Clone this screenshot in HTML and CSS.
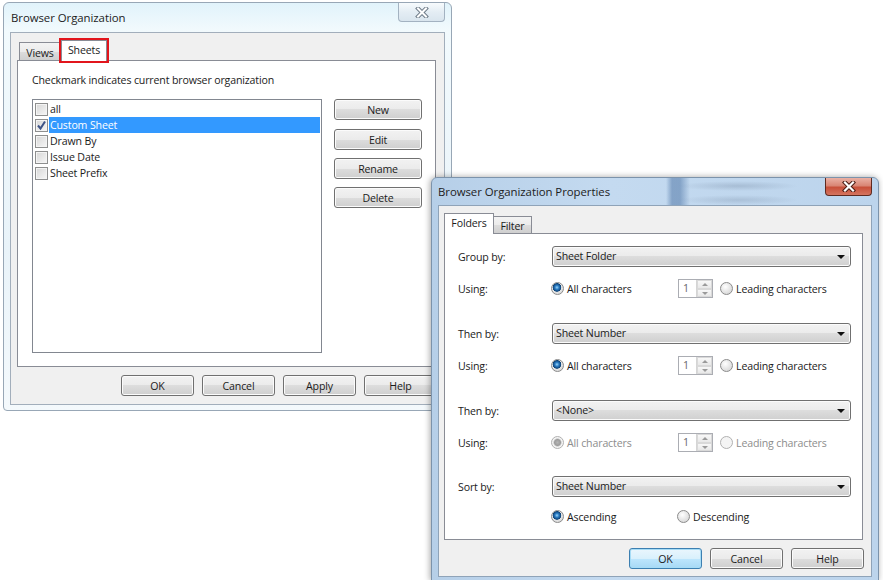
FILE: index.html
```html
<!DOCTYPE html>
<html lang="en">

<head>
    <meta charset="UTF-8">
    <title>Browser Organization</title>
    <link rel="stylesheet" href="styles.css">
</head>

<body>
    <!-- first window: Browser Organization (inactive) -->
    <div class="win dlg1">
        <div class="titlebar">
            <span class="title">Browser Organization</span>
            <span class="close">
                <svg width="14" height="11" viewBox="0 0 14 11">
                    <path d="M3 1.5L11 9.5M11 1.5L3 9.5" stroke="#6f7c89" stroke-width="4" stroke-linecap="square" />
                    <path d="M3 1.5L11 9.5M11 1.5L3 9.5" stroke="#fff" stroke-width="2" stroke-linecap="square" />
                </svg>
            </span>
        </div>
        <div class="client">
            <div class="tabs">
                <div class="tab views">Views</div>
                <div class="tab sheets active marked">Sheets</div>
            </div>
            <div class="pane">
                <p class="hint">Checkmark indicates current browser organization</p>
                <div class="pane-body">
                    <ul class="list">
                        <li><span class="cb"></span><span class="item">all</span></li>
                        <li class="selected"><span class="cb">
                                <svg width="11" height="11" viewBox="0 0 11 11">
                                    <path d="M2 5.5L4.5 8.5L9 1.5" fill="none" stroke="#3e5386" stroke-width="2" />
                                </svg>
                            </span><span class="item">Custom Sheet</span></li>
                        <li><span class="cb"></span><span class="item">Drawn By</span></li>
                        <li><span class="cb"></span><span class="item">Issue Date</span></li>
                        <li><span class="cb"></span><span class="item">Sheet Prefix</span></li>
                    </ul>
                    <div class="side-btns">
                        <button class="btn">New</button>
                        <button class="btn">Edit</button>
                        <button class="btn">Rename</button>
                        <button class="btn">Delete</button>
                    </div>
                </div>
            </div>
            <div class="footer">
                <button class="btn">OK</button>
                <button class="btn">Cancel</button>
                <button class="btn">Apply</button>
                <button class="btn">Help</button>
            </div>
        </div>
    </div>

    <!-- second window: Browser Organization Properties (active) -->
    <div class="win dlg2">
        <div class="titlebar">
            <span class="title">Browser Organization Properties</span>
            <span class="close red">
                <svg width="14" height="11" viewBox="0 0 14 11">
                    <path d="M3 1.5L11 9.5M11 1.5L3 9.5" stroke="#4a1c14" stroke-width="4.2" stroke-linecap="square" />
                    <path d="M3 1.5L11 9.5M11 1.5L3 9.5" stroke="#fff" stroke-width="2.2" stroke-linecap="square" />
                </svg>
            </span>
        </div>
        <div class="client">
            <div class="tabs">
                <div class="tab folders active">Folders</div>
                <div class="tab filter">Filter</div>
            </div>
            <div class="pane pane2">
                <div class="field">
                    <span class="lbl">Group by:</span>
                    <div class="select">Sheet Folder</div>
                </div>
                <div class="using">
                    <span class="lbl">Using:</span>
                    <span class="opt"><span class="rb on"></span>All characters</span>
                    <span class="spin"><span class="spin-val">1</span><span class="spin-btns"><i class="up"></i><i class="down"></i></span></span>
                    <span class="opt opt2"><span class="rb"></span>Leading characters</span>
                </div>

                <div class="field">
                    <span class="lbl">Then by:</span>
                    <div class="select">Sheet Number</div>
                </div>
                <div class="using">
                    <span class="lbl">Using:</span>
                    <span class="opt"><span class="rb on"></span>All characters</span>
                    <span class="spin"><span class="spin-val">1</span><span class="spin-btns"><i class="up"></i><i class="down"></i></span></span>
                    <span class="opt opt2"><span class="rb"></span>Leading characters</span>
                </div>

                <div class="field">
                    <span class="lbl">Then by:</span>
                    <div class="select">&lt;None&gt;</div>
                </div>
                <div class="using disabled last">
                    <span class="lbl">Using:</span>
                    <span class="opt"><span class="rb on"></span>All characters</span>
                    <span class="spin"><span class="spin-val">1</span><span class="spin-btns"><i class="up"></i><i class="down"></i></span></span>
                    <span class="opt opt2"><span class="rb"></span>Leading characters</span>
                </div>

                <div class="field">
                    <span class="lbl">Sort by:</span>
                    <div class="select">Sheet Number</div>
                </div>
                <div class="sort">
                    <span class="opt"><span class="rb on"></span>Ascending</span>
                    <span class="opt"><span class="rb"></span>Descending</span>
                </div>
            </div>
            <div class="footer">
                <button class="btn default">OK</button>
                <button class="btn">Cancel</button>
                <button class="btn">Help</button>
            </div>
        </div>
    </div>
</body>

</html>
```

FILE: styles.css
```css
* {
    box-sizing: border-box;
    margin: 0;
    padding: 0;
}

body {
    width: 883px;
    height: 580px;
    overflow: hidden;
    position: relative;
    background-color: #fff;
    font-family: 'Open Sans', 'Noto Sans', sans-serif;
    font-size: 10.6px;
    letter-spacing: -0.15px;
    color: #1b1b1b;
}

/* windows sit on the desktop */
.win {
    position: absolute;
    display: flex;
    flex-direction: column;
    border: 1px solid #98a7b6;
}

.dlg1 {
    left: 3px;
    top: 2px;
    width: 449px;
    height: 409px;
    padding: 0 6px 5px 6px;
    border-radius: 6px 6px 4px 4px;
    background: linear-gradient(#e1f3fb, #f2fafd 28px, #e9f3f9 60%, #f4f9fc);
}

.dlg2 {
    left: 431px;
    top: 177px;
    width: 448px;
    height: 404px;
    padding: 0 6px 3px 6px;
    border-color: #7c93ab;
    border-radius: 6px 6px 0 0;
    background: linear-gradient(to right, #b6cfe8, #c4daf0 40%, #bcd4ec);
    box-shadow: -1px 0 6px rgba(0, 0, 0, .35);
}

.titlebar {
    height: 29px;
    flex-shrink: 0;
    display: flex;
    align-items: center;
    justify-content: space-between;
    position: relative;
}

.dlg2 .titlebar {
    height: 27px;
    background:
        linear-gradient(to right, transparent 228px, rgba(70, 110, 160, .5) 234px, rgba(70, 110, 160, .5) 242px, transparent 252px),
        radial-gradient(ellipse 60px 5px at 300px 8px, rgba(120, 140, 165, .35), transparent),
        radial-gradient(ellipse 60px 5px at 300px 22px, rgba(120, 140, 165, .3), transparent);
}

.title {
    font-size: 11.4px;
    letter-spacing: -0.05px;
    margin-left: 1px;
    color: #1c1c1c;
}

.dlg2 .title {
    margin-left: 0;
}

.close {
    align-self: flex-start;
    width: 47px;
    height: 19px;
    display: flex;
    align-items: center;
    justify-content: center;
    border: 1px solid #a3b2c1;
    border-top: none;
    border-radius: 0 0 4px 4px;
    background: linear-gradient(#f7fbfd, #e4edf4 50%, #d9e5ee);
}

.close.red {
    height: 18px;
    border-color: #5e2a20;
    background: linear-gradient(#eab0a4, #d98675 45%, #c8503a 55%, #d4745f);
}

.client {
    flex: 1;
    display: flex;
    flex-direction: column;
    border: 1px solid #a2aebb;
    background-color: #f0f0f0;
    padding: 6px 8px 8px 6px;
}

.dlg2 .client {
    padding: 7px 8px 7px 5px;
    border-color: #8fa3b8;
}

/* tabs */
.tabs {
    display: flex;
    align-items: flex-end;
    height: 21px;
}

.dlg2 .tabs {
    height: 20px;
}

.tab {
    height: 18px;
    border: 1px solid #898c95;
    border-bottom: none;
    display: flex;
    align-items: center;
    justify-content: center;
    background: linear-gradient(#f3f3f3, #ebebeb 50%, #dddddd 50%, #cfcfcf);
}

.tab.active {
    height: 21px;
    margin-bottom: -1px;
    position: relative;
    z-index: 1;
    background: #fff;
    padding-bottom: 2px;
}

.views {
    width: 42px;
    margin-left: 2px;
    padding-top: 2px;
}

.sheets {
    width: 46px;
    height: 21px;
}

.marked {
    outline: 2px solid #e2151c;
}

.folders {
    width: 50px;
    height: 21px;
}

.filter {
    width: 38px;
    height: 17px;
    border-left: none;
    padding-top: 2px;
}

.pane {
    flex: 1;
    border: 1px solid #898c95;
    background-color: #fff;
    padding: 11px 13px 13px 14px;
    display: flex;
    flex-direction: column;
}

.hint {
    line-height: 16px;
    margin-bottom: 11px;
}

.pane-body {
    display: flex;
    gap: 12px;
}

.list {
    list-style: none;
    width: 290px;
    height: 254px;
    border: 1px solid #828790;
    padding: 1px 1px 1px 2px;
    background-color: #fff;
}

.list li {
    height: 16px;
    display: flex;
    align-items: center;
}

.item {
    flex: 1;
    height: 16px;
    line-height: 16px;
    padding-left: 1px;
    margin-left: 1px;
}

.selected .item {
    background-color: #3399ff;
    color: #fff;
}

.cb {
    width: 13px;
    height: 13px;
    border: 1px solid #8e8f8f;
    background: linear-gradient(135deg, #d6d6d6, #f7f7f7);
    box-shadow: inset 0 0 0 1px #f4f4f4;
    display: flex;
    align-items: center;
    justify-content: center;
}

.side-btns {
    display: flex;
    flex-direction: column;
    gap: 8px;
    width: 88px;
}

.side-btns .btn:first-child {
    margin-bottom: 1px;
}

.btn {
    height: 21px;
    width: 73px;
    border: 1px solid #707070;
    border-radius: 3px;
    background: linear-gradient(#f2f2f2, #ebebeb 50%, #dddddd 50%, #cfcfcf);
    box-shadow: inset 0 0 0 1px #fbfbfb;
    font: inherit;
    letter-spacing: inherit;
    color: #1b1b1b;
}

.side-btns .btn {
    width: 88px;
}

.btn.default {
    border-color: #3c7fb1;
    box-shadow: inset 0 0 0 1px #a6dcf6;
    background: linear-gradient(#eaf6fd, #d9f0fc 50%, #bee6fd 50%, #a7d9f5);
}

.footer {
    display: flex;
    justify-content: flex-end;
    gap: 8px;
    margin-top: 8px;
    margin-right: -1px;
}

/* properties pane */
.pane2 {
    padding: 12px 11px 0 13px;
}

.field {
    display: flex;
    align-items: center;
    height: 21px;
}

.lbl {
    width: 94px;
    flex-shrink: 0;
}

.select {
    flex: 1;
    height: 21px;
    line-height: 19px;
    padding-left: 3px;
    border: 1px solid #707070;
    border-radius: 3px;
    background: linear-gradient(#f2f2f2, #ebebeb 50%, #dddddd 50%, #cfcfcf);
    box-shadow: inset 0 0 0 1px #fbfbfb;
    position: relative;
}

.select::after {
    content: '';
    position: absolute;
    right: 5px;
    top: 8px;
    border-left: 4px solid transparent;
    border-right: 4px solid transparent;
    border-top: 4px solid #111;
}

.using {
    display: flex;
    align-items: center;
    height: 19px;
    margin: 12px 0 25px;
}

.using.last {
    margin-bottom: 24px;
}

.opt {
    display: flex;
    align-items: center;
    gap: 3px;
    width: 127px;
    margin-left: -1px;
}

.opt2 {
    width: auto;
    margin-left: 7px;
}

.rb {
    width: 13px;
    height: 13px;
    border-radius: 50%;
    border: 1px solid #8b8b8b;
    background: radial-gradient(circle at 40% 35%, #fff, #e6e6e6 50%, #cfcfcf);
}

.rb.on {
    background:
        radial-gradient(circle at 45% 40%, #9ad6f8 0, #2b7cc4 2px, #0d4276 4px, transparent 4.6px),
        radial-gradient(circle at 40% 35%, #fff, #e6e6e6 50%, #cfcfcf);
}

.spin {
    width: 35px;
    height: 19px;
    border: 1px solid #abadb3;
    background-color: #fff;
    display: flex;
}

.spin-val {
    flex: 1;
    padding-left: 4px;
    line-height: 17px;
    color: #666;
}

.spin-btns {
    width: 16px;
    display: flex;
    flex-direction: column;
    border-left: 1px solid #d5d5d5;
}

.spin-btns i {
    flex: 1;
    position: relative;
    background: linear-gradient(#f8f8f8, #e8e8e8);
    border: 1px solid #d9d9d9;
}

.spin-btns i::after {
    content: '';
    position: absolute;
    left: 4px;
    top: 2px;
    border-left: 3px solid transparent;
    border-right: 3px solid transparent;
}

.spin-btns .up::after {
    border-bottom: 3px solid #9a9a9a;
}

.spin-btns .down::after {
    border-top: 3px solid #9a9a9a;
}

.disabled .opt {
    color: #8d8d8d;
}

.disabled .rb {
    border-color: #b1b1b1;
    background: #f4f4f4;
}

.disabled .rb.on {
    background:
        radial-gradient(circle, #b5b5b5 0, #9c9c9c 3px, transparent 4.5px),
        #f4f4f4;
}

.sort {
    display: flex;
    align-items: center;
    height: 19px;
    margin-top: 10px;
    padding-left: 94px;
}
```
